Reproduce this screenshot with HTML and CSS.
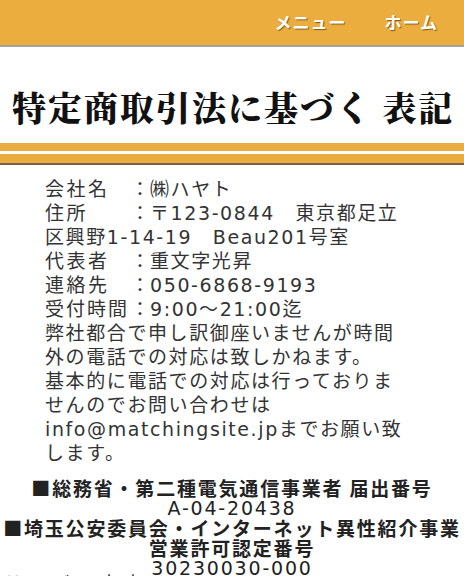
FILE: index.html
```html
<!DOCTYPE html>
<html lang="ja">
<head>
<meta charset="utf-8">
<title>特定商取引法に基づく表記</title>
<link rel="stylesheet" href="styles.css">
</head>
<body>
<header class="topbar">
  <nav class="nav">
    <a class="nav-link" href="#">メニュー</a>
    <a class="nav-link" href="#">ホーム</a>
  </nav>
</header>
<h1 class="title">特定商取引法に基づく 表記</h1>
<div class="rule">
  <div class="rule-top"></div>
  <div class="rule-bottom"></div>
</div>
<section class="info">
  <p class="info-text"><span class="lbl">会社名</span><span class="colon">：</span>㈱ハヤト<br><span class="lbl">住所</span><span class="colon">：</span>〒123-0844　東京都足立<br>区興野1-14-19　Beau201号室<br><span class="lbl">代表者</span><span class="colon">：</span>重文字光昇<br><span class="lbl">連絡先</span><span class="colon">：</span>050-6868-9193<br><span class="lbl lbl-4">受付時間</span><span class="colon">：</span>9:00～21:00迄<br>弊社都合で申し訳御座いませんが時間<br>外の電話での対応は致しかねます。<br>基本的に電話での対応は行っておりま<br>せんのでお問い合わせは<br>info@matchingsite.jpまでお願い致<br>します。</p>
</section>
<section class="licence">
  <p class="lic-head">■総務省・第二種電気通信事業者 届出番号</p>
  <p class="lic-num">A-04-20438</p>
  <p class="lic-head">■埼玉公安委員会・インターネット異性紹介事業</p>
  <p class="lic-head">営業許可認定番号</p>
  <p class="lic-num">30230030-000</p>
</section>
<h2 class="next">サービス内容</h2>
</body>
</html>
```
FILE: styles.css
```css
html, body {
  margin: 0;
  padding: 0;
  background: #ffffff;
}
body {
  width: 464px;
  overflow: hidden;
  font-family: "DejaVu Sans", "Noto Sans CJK JP", sans-serif;
  color: #333333;
}
.topbar {
  height: 45px;
  background: #ebae3e;
  border-bottom: 2px solid #a3a3a3;
  display: flex;
  align-items: center;
  justify-content: flex-end;
}
.nav {
  display: flex;
  gap: 38px;
  padding-right: 26px;
  margin-top: -2px;
}
.nav-link {
  color: #ffffff;
  text-decoration: none;
  font-family: "Noto Sans CJK JP", sans-serif;
  font-weight: 700;
  font-size: 17px;
  letter-spacing: 1px;
  text-shadow: 1px 1px 1px rgba(60, 40, 0, 0.6);
}
.title {
  margin: 0;
  padding: 42px 0 18px 12px;
  line-height: 36px;
  font-family: "Noto Serif CJK JP", "IPAMincho", "Noto Sans CJK JP", serif;
  font-weight: 900;
  font-size: 34px;
  letter-spacing: 2px;
  color: #111111;
  white-space: nowrap;
}
.rule-top {
  height: 8px;
  background: #e9ad3f;
  margin-bottom: 3px;
}
.rule-bottom {
  height: 9px;
  background: #e9ad3f;
  border-bottom: 2px solid #7a6048;
}
.info {
  padding: 12px 0 0 45px;
}
.info-text {
  margin: 0;
  font-size: 19px;
  line-height: 24px;
  letter-spacing: 1.6px;
  white-space: nowrap;
  color: #333333;
}
.lbl {
  display: inline-block;
  width: 85px;
  letter-spacing: 2.5px;
}
.lbl-4 {
  letter-spacing: 2px;
}
.colon {
  display: inline-block;
  width: 20px;
  text-align: center;
  letter-spacing: 0;
}
.licence {
  margin-top: 13px;
  text-align: center;
}
.lic-head {
  margin: 0;
  font-family: "Noto Sans CJK JP", sans-serif;
  font-weight: 700;
  font-size: 19px;
  line-height: 20px;
  letter-spacing: 1.8px;
  white-space: nowrap;
  color: #222222;
}
.lic-num {
  margin: 0;
  font-size: 19px;
  line-height: 20px;
  letter-spacing: 1.8px;
  color: #222222;
}
.next {
  margin: -4px 0 0 3px;
  font-family: "Noto Sans CJK JP", sans-serif;
  font-weight: 400;
  font-size: 20px;
  line-height: 20px;
  letter-spacing: 4px;
  color: #333333;
}
```
